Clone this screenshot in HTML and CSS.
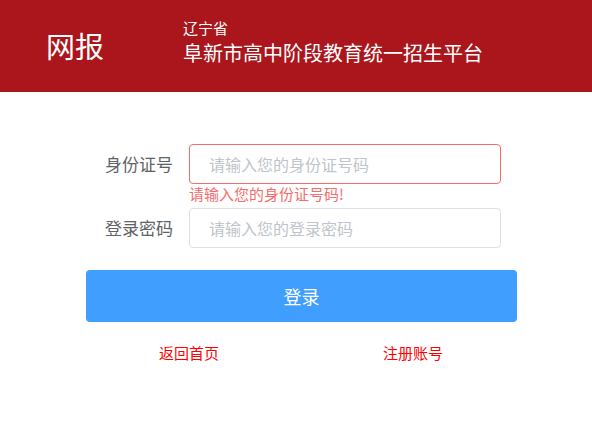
FILE: index.html
```html
<!DOCTYPE html>
<html lang="zh-CN">
<head>
<meta charset="utf-8">
<title>网报</title>
<link rel="stylesheet" href="styles.css">
</head>
<body>
<header class="header">
  <div class="logo">网报</div>
  <div class="title">
    <div class="province">辽宁省</div>
    <div class="name">阜新市高中阶段教育统一招生平台</div>
  </div>
</header>
<main class="main">
  <form class="form">
    <div class="row">
      <label class="label">身份证号</label>
      <div class="field">
        <input class="input input-error" type="text" placeholder="请输入您的身份证号码">
        <div class="error">请输入您的身份证号码!</div>
      </div>
    </div>
    <div class="row">
      <label class="label">登录密码</label>
      <div class="field">
        <input class="input" type="password" placeholder="请输入您的登录密码">
      </div>
    </div>
    <button class="btn" type="button">登录</button>
  </form>
  <div class="links">
    <a class="link" href="#">返回首页</a>
    <a class="link" href="#">注册账号</a>
  </div>
</main>
</body>
</html>
```

FILE: styles.css
```css
* { box-sizing: border-box; }
html, body {
  margin: 0;
  padding: 0;
  background: #fff;
  font-family: "Noto Sans CJK SC", "Liberation Sans", sans-serif;
}
.header {
  height: 92px;
  background: #aa161c;
  color: #fff;
  display: flex;
  align-items: center;
}
.logo {
  font-size: 29px;
  line-height: 1;
  margin-left: 46px;
  width: 137px;
  margin-top: -2px;
}
.title {
  display: flex;
  flex-direction: column;
  margin-top: -8px;
}
.province {
  font-size: 15px;
  line-height: 18px;
}
.name {
  font-size: 20px;
  line-height: 26px;
  margin-top: 3px;
}
.main {
  padding-top: 52px;
}
.form {
  width: 431px;
  margin-left: 86px;
}
.row {
  display: flex;
  align-items: flex-start;
  margin-bottom: 24px;
}
.label {
  width: 103px;
  padding-right: 16px;
  text-align: right;
  font-size: 17px;
  line-height: 40px;
  color: #606266;
}
.field {
  position: relative;
  width: 312px;
}
.input {
  display: block;
  width: 312px;
  height: 40px;
  border: 1px solid #dcdfe6;
  border-radius: 4px;
  padding: 0 19px;
  font-family: inherit;
  font-size: 16px;
  color: #606266;
  outline: none;
  background: #fff;
}
.input::placeholder { color: #c0c4cc; }
.input-error { border-color: #f56c6c; }
.error {
  position: absolute;
  top: 100%;
  left: 0;
  padding-top: 2px;
  font-size: 15px;
  line-height: 16px;
  color: #f56c6c;
  white-space: nowrap;
}
.btn {
  display: block;
  width: 431px;
  height: 52px;
  margin-top: -2px;
  border: none;
  border-radius: 4px;
  background: #409eff;
  color: #fff;
  font-family: inherit;
  font-size: 18px;
}
.links {
  width: 448px;
  margin-left: 77px;
  margin-top: 22px;
  display: flex;
}
.link {
  flex: 1;
  text-align: center;
  color: #ff0000;
  text-decoration: none;
  font-size: 15px;
  line-height: 18px;
}
```
